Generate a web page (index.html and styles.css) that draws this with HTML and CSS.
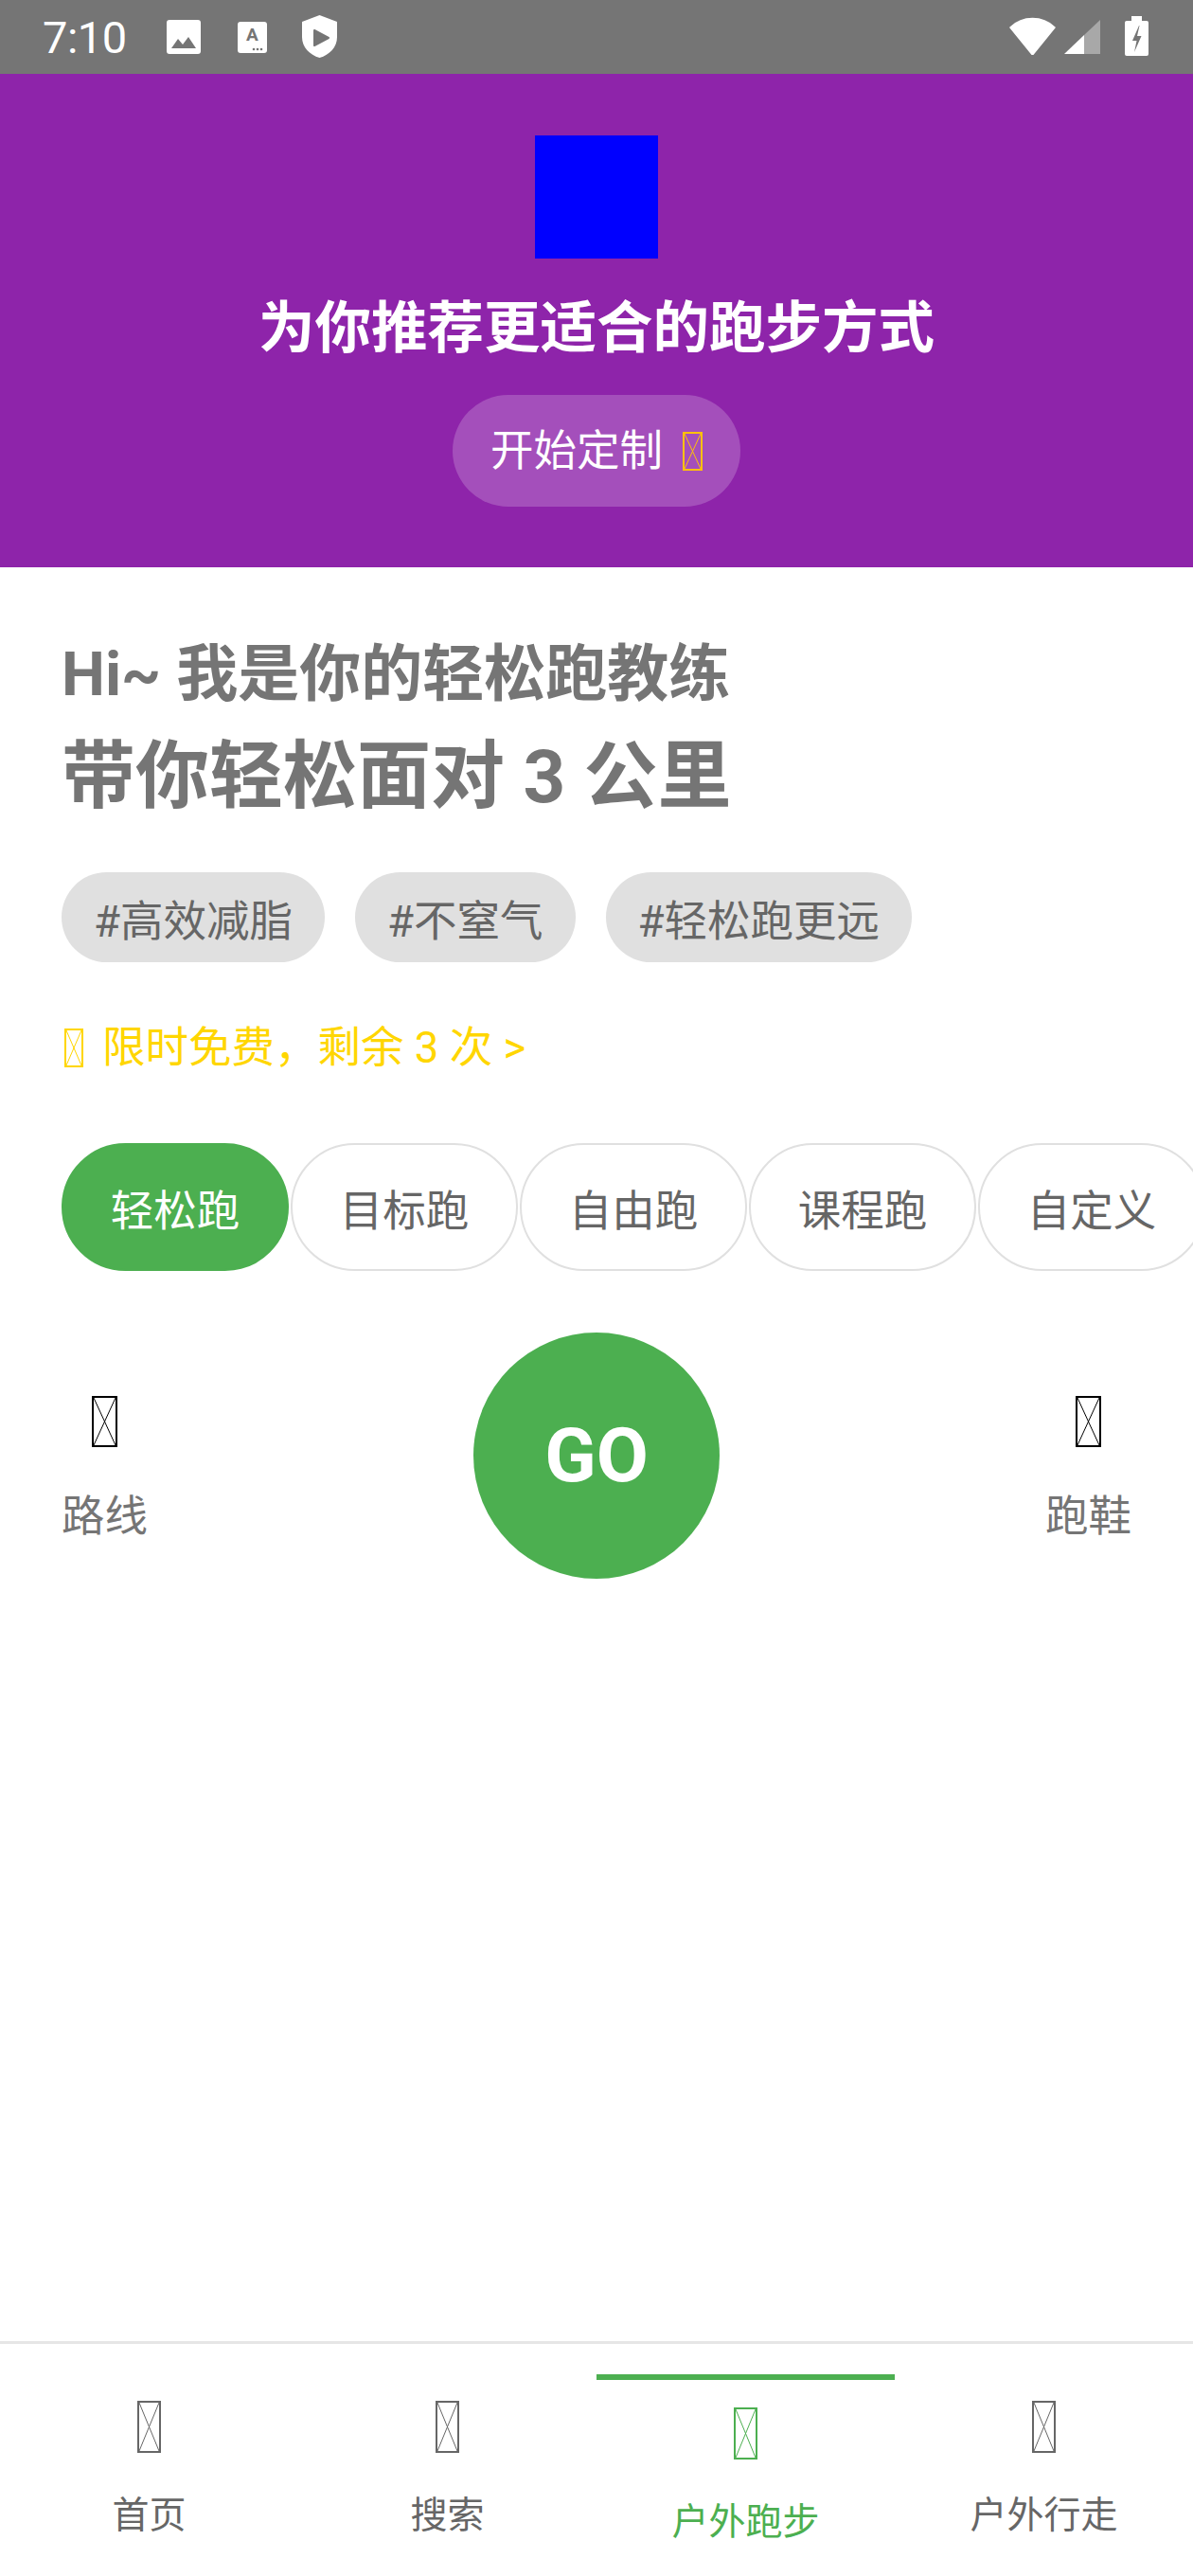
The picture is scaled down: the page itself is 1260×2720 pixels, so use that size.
FILE: index.html
```html
<!DOCTYPE html>
<html lang="zh-CN">
<head>
<meta charset="utf-8">
<title>户外跑步</title>
<link rel="stylesheet" href="styles.css">
</head>
<body>
<div class="screen">
  <div class="status">
    <span class="time">7:10</span>
    <svg class="s-img" width="36" height="36" viewBox="0 0 36 36"><rect x="0" y="0" width="36" height="36" rx="3" fill="#fff"/><path d="M5 30 L12 20 L17 26 L23 18 L31 30 Z" fill="#757575"/></svg>
    <svg class="s-a" width="31" height="33" viewBox="0 0 31 33"><rect x="0" y="0" width="31" height="33" rx="3" fill="#fff"/><text x="15.5" y="20" text-anchor="middle" font-family="Roboto" font-weight="700" font-size="19" fill="#757575">A</text><circle cx="17" cy="29" r="1.3" fill="#757575"/><circle cx="21" cy="29" r="1.3" fill="#757575"/><circle cx="25" cy="29" r="1.3" fill="#757575"/></svg>
    <svg class="s-shield" width="37" height="45" viewBox="0 0 37 45"><path d="M18.5 0 L37 7 V23 C37 34 29 42 18.5 45 C8 42 0 34 0 23 V7 Z" fill="#fff"/><path d="M13 16 L28 24 L13 32 Z" fill="#757575" stroke="#757575" stroke-width="2" stroke-linejoin="round"/></svg>
    <span class="s-spacer"></span>
    <svg class="s-wifi" width="49" height="40" viewBox="0 0 49 40"><path d="M1 11 A34 34 0 0 1 48 11 L24.5 40 Z" fill="#fff" stroke="#fff" stroke-width="1.5" stroke-linejoin="round"/></svg>
    <svg class="s-signal" width="38" height="36" viewBox="0 0 38 36"><path d="M0 36 L21 16 L21 36 Z" fill="#fff"/><path d="M21 16 L38 0 L38 36 L21 36 Z" fill="#a8a8a8"/></svg>
    <svg class="s-batt" width="25" height="42" viewBox="0 0 25 42"><rect x="7" y="0" width="11" height="6" fill="#fff"/><rect x="0" y="5" width="25" height="37" rx="2" fill="#fff"/><path d="M15 10 L8 26 L12.5 26 L10 38 L17.5 21 L13 21 L15.5 10 Z" fill="#757575"/></svg>
  </div>

  <div class="header">
    <div class="logo"></div>
    <div class="title">为你推荐更适合的跑步方式</div>
    <div class="cta">
      <span>开始定制</span>
      <svg class="tofu cta-icon" width="21" height="41" viewBox="0 0 21 41"><rect x="1" y="1" width="19" height="39" fill="none" stroke="currentColor" stroke-width="2"/><path d="M2 2 L19 39 M19 2 L2 39" stroke="currentColor" stroke-width="1"/></svg>
    </div>
  </div>

  <div class="main">
    <div class="hi">Hi~ 我是你的轻松跑教练</div>
    <div class="big">带你轻松面对 3 公里</div>
    <div class="tags">
      <span class="tag">#高效减脂</span>
      <span class="tag">#不窒气</span>
      <span class="tag">#轻松跑更远</span>
    </div>
    <div class="promo">
      <svg class="tofu promo-icon" width="20" height="41" viewBox="0 0 20 41"><rect x="1" y="1" width="18" height="39" fill="none" stroke="currentColor" stroke-width="2"/><path d="M2 2 L18 39 M18 2 L2 39" stroke="currentColor" stroke-width="1"/></svg>
      <span>限时免费，剩余 3 次 &gt;</span>
    </div>
    <div class="modes">
      <span class="mode active">轻松跑</span>
      <span class="mode">目标跑</span>
      <span class="mode">自由跑</span>
      <span class="mode">课程跑</span>
      <span class="mode">自定义</span>
    </div>
    <div class="gorow">
      <div class="side">
        <svg class="tofu side-icon" width="27" height="54" viewBox="0 0 27 54"><rect x="1" y="1" width="25" height="52" fill="none" stroke="currentColor" stroke-width="2"/><path d="M2 2 L25 52 M25 2 L2 52" stroke="currentColor" stroke-width="1"/></svg>
        <span class="side-label">路线</span>
      </div>
      <div class="go">GO</div>
      <div class="side">
        <svg class="tofu side-icon" width="27" height="54" viewBox="0 0 27 54"><rect x="1" y="1" width="25" height="52" fill="none" stroke="currentColor" stroke-width="2"/><path d="M2 2 L25 52 M25 2 L2 52" stroke="currentColor" stroke-width="1"/></svg>
        <span class="side-label">跑鞋</span>
      </div>
    </div>
  </div>

  <div class="nav">
    <div class="nav-item">
      <span class="bar"></span>
      <svg class="tofu nav-icon" width="25" height="55" viewBox="0 0 25 55"><rect x="1" y="1" width="23" height="53" fill="none" stroke="currentColor" stroke-width="2"/><path d="M2 2 L23 53 M23 2 L2 53" stroke="currentColor" stroke-width="1"/></svg>
      <span class="nav-label">首页</span>
    </div>
    <div class="nav-item">
      <span class="bar"></span>
      <svg class="tofu nav-icon" width="25" height="55" viewBox="0 0 25 55"><rect x="1" y="1" width="23" height="53" fill="none" stroke="currentColor" stroke-width="2"/><path d="M2 2 L23 53 M23 2 L2 53" stroke="currentColor" stroke-width="1"/></svg>
      <span class="nav-label">搜索</span>
    </div>
    <div class="nav-item selected">
      <span class="bar"></span>
      <svg class="tofu nav-icon" width="25" height="55" viewBox="0 0 25 55"><rect x="1" y="1" width="23" height="53" fill="none" stroke="currentColor" stroke-width="2"/><path d="M2 2 L23 53 M23 2 L2 53" stroke="currentColor" stroke-width="1"/></svg>
      <span class="nav-label">户外跑步</span>
    </div>
    <div class="nav-item">
      <span class="bar"></span>
      <svg class="tofu nav-icon" width="25" height="55" viewBox="0 0 25 55"><rect x="1" y="1" width="23" height="53" fill="none" stroke="currentColor" stroke-width="2"/><path d="M2 2 L23 53 M23 2 L2 53" stroke="currentColor" stroke-width="1"/></svg>
      <span class="nav-label">户外行走</span>
    </div>
  </div>
</div>
</body>
</html>
```

FILE: styles.css
```css
* { box-sizing: border-box; margin: 0; padding: 0; }

html, body {
  width: 1260px;
  height: 2720px;
  overflow: hidden;
  background: #fff;
}

body {
  font-family: Roboto, "Noto Sans CJK SC", sans-serif;
}

.screen {
  display: flex;
  flex-direction: column;
  height: 2720px;
}

/* status bar */
.status {
  height: 78px;
  flex-shrink: 0;
  background: #757575;
  display: flex;
  align-items: center;
  padding: 0 47px 0 45px;
  color: #fff;
}
.time {
  font-family: Roboto, sans-serif;
  font-size: 47px;
  line-height: 47px;
  letter-spacing: -0.5px;
}
.s-img { margin-left: 42px; }
.s-a { margin-left: 39px; }
.s-shield { margin-left: 37px; margin-top: -1px; }
.s-spacer { flex: 1; }
.s-wifi { margin-top: -3px; }
.s-signal { margin-left: 9px; }
.s-batt { margin-left: 26px; margin-top: -2px; }

/* header */
.header {
  height: 521px;
  flex-shrink: 0;
  background: #8e24aa;
  display: flex;
  flex-direction: column;
  align-items: center;
  padding-top: 65px;
}
.logo {
  width: 130px;
  height: 130px;
  background: #0000ff;
}
.title {
  margin-top: 39px;
  font-size: 59.5px;
  line-height: 70px;
  font-weight: 700;
  color: #fff;
}
.cta {
  margin-top: 35px;
  height: 118px;
  border-radius: 59px;
  background: rgba(255, 255, 255, 0.2);
  display: flex;
  align-items: center;
  padding: 0 40px;
  color: #fff;
  font-size: 45.5px;
  line-height: 55px;
}
.cta-icon {
  margin-left: 21px;
  color: #ffc107;
}

/* main */
.main {
  flex: 1;
  padding: 0 65px;
  display: flex;
  flex-direction: column;
  align-items: flex-start;
}
.hi {
  margin-top: 74px;
  font-size: 65px;
  line-height: 78px;
  font-weight: 700;
  color: #757575;
}
.big {
  margin-top: 23px;
  font-size: 78px;
  line-height: 94px;
  font-weight: 700;
  color: #757575;
}
.tags {
  margin-top: 53px;
  display: flex;
  gap: 32px;
}
.tag {
  height: 95px;
  border-radius: 47.5px;
  background: #e0e0e0;
  color: #666;
  font-size: 45.5px;
  padding: 0 34px;
  display: flex;
  align-items: center;
}
.promo {
  margin-top: 63px;
  display: flex;
  align-items: center;
  height: 55px;
  color: #ffd600;
  font-size: 45.5px;
  line-height: 55px;
}
.promo-icon {
  margin-left: 3px;
  margin-right: 20px;
}
.modes {
  margin-top: 73px;
  display: flex;
  gap: 2px;
  width: calc(100% + 65px);
  overflow: hidden;
}
.mode {
  flex-shrink: 0;
  width: 240px;
  height: 135px;
  border-radius: 67.5px;
  border: 2px solid #e0e0e0;
  background: #fff;
  color: #666;
  font-size: 45.5px;
  display: flex;
  align-items: center;
  justify-content: center;
}
.mode.active {
  background: #4caf50;
  border-color: #4caf50;
  color: #fff;
}
.gorow {
  margin-top: 65px;
  width: 100%;
  display: flex;
  justify-content: space-between;
  align-items: flex-start;
}
.side {
  display: flex;
  flex-direction: column;
  align-items: center;
  padding-top: 67px;
  color: #000;
}
.side-label {
  margin-top: 46px;
  font-size: 45.5px;
  line-height: 55px;
  color: #757575;
}
.go {
  width: 260px;
  height: 260px;
  border-radius: 50%;
  background: #4caf50;
  color: #fff;
  font-family: Roboto, sans-serif;
  font-weight: 700;
  font-size: 80px;
  display: flex;
  align-items: center;
  justify-content: center;
}

/* bottom nav */
.nav {
  height: 248px;
  flex-shrink: 0;
  border-top: 3px solid #e6e6e6;
  display: flex;
}
.nav-item {
  flex: 1;
  display: flex;
  flex-direction: column;
  align-items: center;
  color: #666;
}
.bar {
  display: block;
  width: 100%;
  height: 6px;
  margin-top: 32px;
}
.nav-icon {
  margin-top: 22px;
}
.nav-label {
  margin-top: 43px;
  font-size: 39px;
  line-height: 47px;
}
.nav-item.selected {
  color: #4caf50;
}
.nav-item.selected .bar {
  background: #4caf50;
}
.nav-item.selected .nav-icon {
  margin-top: 29px;
}
```
